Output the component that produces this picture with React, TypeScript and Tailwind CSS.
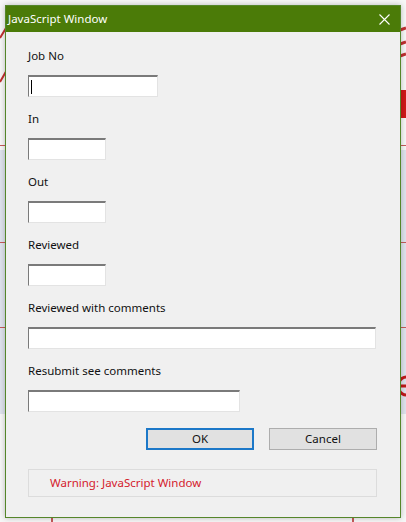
import React from "react";

const font = { fontFamily: '"Noto Sans", "Open Sans", sans-serif' };

const fields = [
  { label: "Job No", width: "w-[130px]", focused: true },
  { label: "In", width: "w-[78px]" },
  { label: "Out", width: "w-[78px]" },
  { label: "Reviewed", width: "w-[78px]" },
  { label: "Reviewed with comments", width: "w-[348px]" },
  { label: "Resubmit see comments", width: "w-[212px]" },
];

const Field = ({ label, width, focused }: { label: string; width: string; focused?: boolean }) => (
  <div className="flex flex-col">
    <label className="h-4 leading-4 text-[11.5px] text-[#111]">{label}</label>
    <div
      className={`${width} h-[22px] mt-[11px] mb-[14px] bg-white border-t-2 border-l border-t-[#7a7a7a] border-l-[#7a7a7a] border-r border-b border-r-[#e3e3e3] border-b-[#e3e3e3] flex items-center pl-[2px]`}
    >
      {focused && <span className="w-px h-[14px] bg-black" />}
    </div>
  </div>
);

export default function App() {
  return (
    <div className="relative w-[406px] h-[522px] overflow-hidden bg-[#f7f7f7]" style={font}>
      {/* page behind the dialog */}
      <div className="absolute left-0 right-0 top-[150px] bottom-[108px] bg-[#dfe3ed]" />
      <div className="absolute left-0 right-0 top-[145px] h-px bg-[#c65a5a]" />
      <div className="absolute left-0 right-0 top-[242px] h-px bg-[#c65a5a]" />
      <div className="absolute left-0 right-0 top-[327px] h-px bg-[#c65a5a]" />
      <div className="absolute left-[51px] top-[500px] bottom-0 w-[2px] bg-[#c65a5a]" />
      <div className="absolute left-[352px] top-[500px] bottom-0 w-[2px] bg-[#c65a5a]" />
      <div className="absolute right-0 top-[90px] w-[8px] h-[28px] bg-[#d01818]" />
      <svg className="absolute left-0 top-0" width="406" height="400">
        <path d="M0 38 L6 28 M0 82 L8 68" stroke="#c03030" strokeWidth="2" />
        <path d="M400 30 L406 28 M400 44 L406 42 M400 56 L406 54" stroke="#c03030" strokeWidth="3" />
        <path d="M410 378 A8 9 0 1 0 410 394 M401 386 L412 386" stroke="#c01818" strokeWidth="3" fill="none" />
      </svg>

      {/* dialog */}
      <div className="relative ml-[5px] mt-[5px] w-[396px] h-[513px] border border-[#55862a] bg-[#f0f0f0] flex flex-col shadow-[0_0_6px_rgba(0,0,0,0.25)]">
        <div className="h-[26px] bg-[#4b7b08] flex items-center justify-between pl-[2px] pr-[10px]">
          <span className="text-[11.5px] text-white">JavaScript Window</span>
          <svg width="11" height="11" viewBox="0 0 11 11">
            <path d="M0.5 0.5 L10.5 10.5 M10.5 0.5 L0.5 10.5" stroke="white" strokeWidth="1.1" />
          </svg>
        </div>

        <div className="flex flex-col pl-[22px] pr-[22px] pt-[16px]">
          {fields.map((f) => (
            <Field key={f.label} {...f} />
          ))}

          <div className="flex justify-end gap-[15px] mt-[2px] pr-px">
            <button className="w-[108px] h-[22px] bg-[#e1e1e1] border-2 border-[#1c78c8] text-[11.5px] leading-none text-[#111]">
              OK
            </button>
            <button className="w-[108px] h-[22px] bg-[#e1e1e1] border border-[#adadad] text-[11.5px] leading-none text-[#111]">
              Cancel
            </button>
          </div>

          <div className="mt-[19px] w-[349px] h-[28px] border border-[#dcdcdc] flex items-center pl-[21px]">
            <span className="text-[11.5px] text-[#d4202c]">Warning: JavaScript Window</span>
          </div>
        </div>
      </div>
    </div>
  );
}
